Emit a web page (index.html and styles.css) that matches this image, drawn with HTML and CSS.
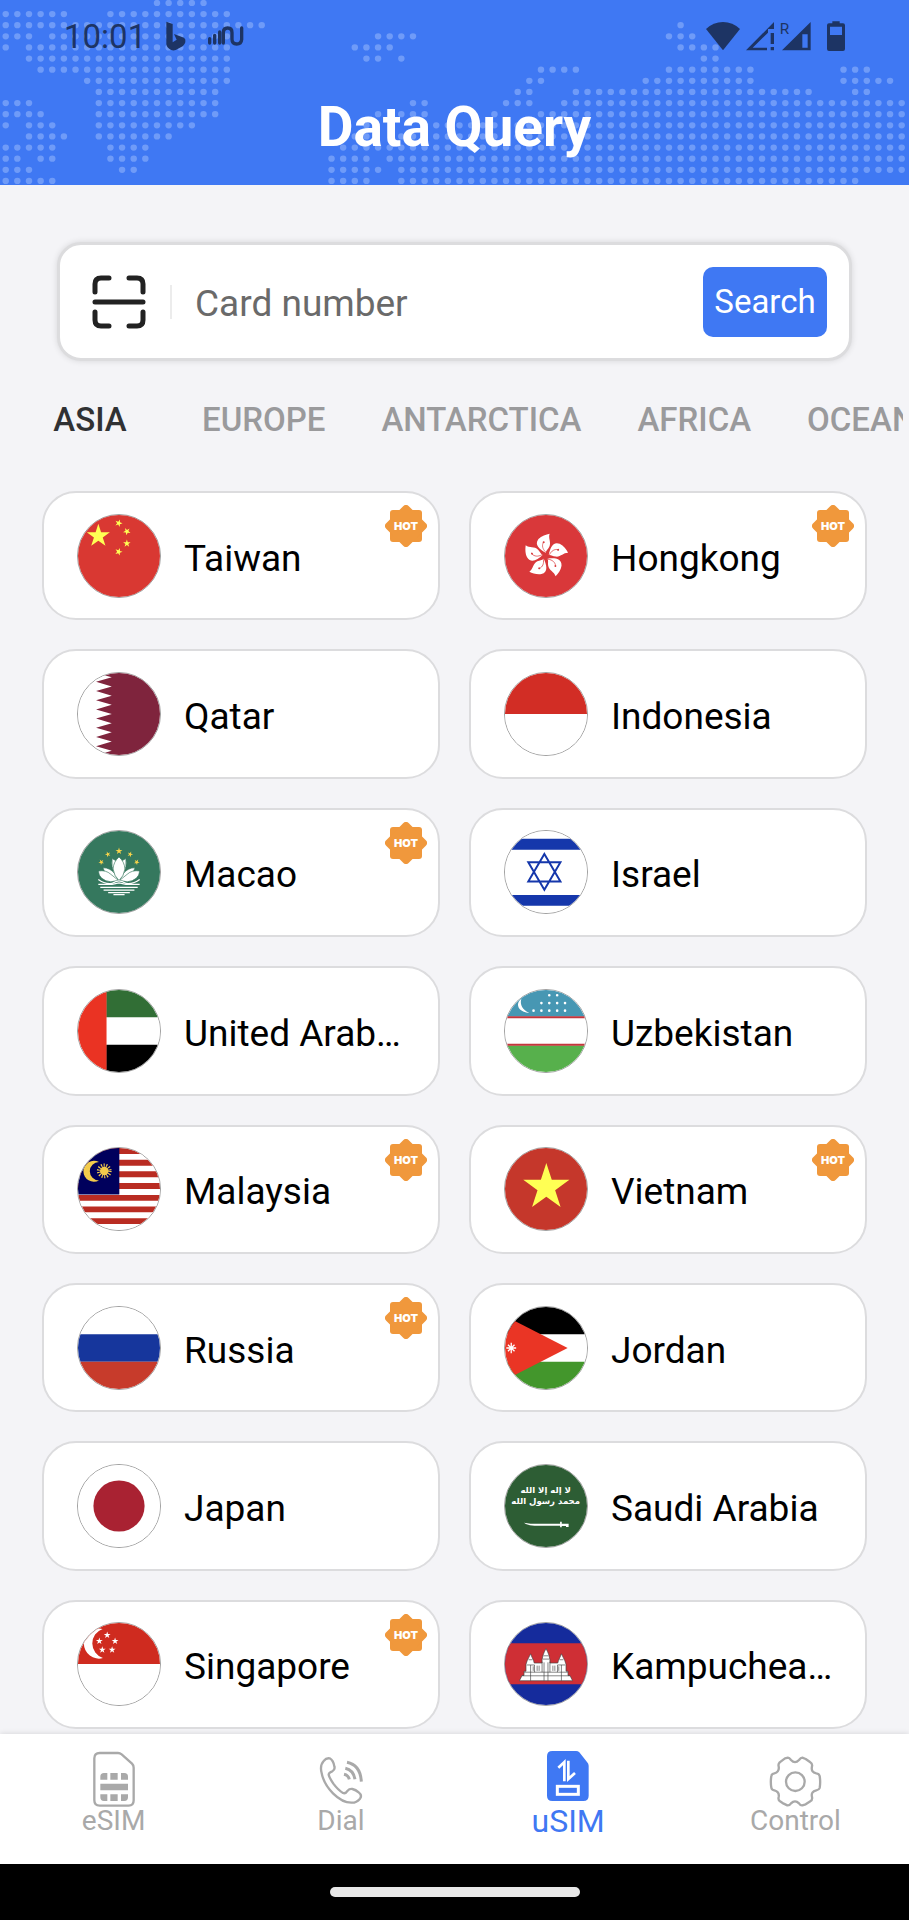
FILE: index.html
```html
<!DOCTYPE html>
<html lang="en">
<head>
    <meta charset="UTF-8">
    <meta name="viewport" content="width=device-width, initial-scale=1.0">
    <title>Data Query</title>
    <link rel="stylesheet" href="styles.css">
</head>
<body>

    <!-- Shared shapes -->
    <svg class="defs" aria-hidden="true">
        <defs>
            <path id="star" d="M0-1 .2245-.309 .951-.309 .363 .118 .588 .809 0 .382-.588 .809-.363 .118-.951-.309-.2245-.309z"/>
            <path id="petal" d="M0-10C-18-20-36-34-22-52C-13-62 2-66 12-68C7-54 18-42 11-28C7-20 2-18 0-10z"/>
            <g id="flower-part">
                <use href="#petal" fill="#fff"/>
                <path d="M0-12C-10-22-12-32-7-42" fill="none" stroke="#d9383a" stroke-width="2"/>
                <circle cx="-6" cy="-42" r="3" fill="#d9383a"/>
            </g>
            <symbol id="hot" viewBox="0 0 42 42">
                <rect x="5" y="5" width="32" height="32" rx="3" fill="#f0983c"/>
                <rect x="5" y="5" width="32" height="32" rx="4" fill="#f0983c" transform="rotate(45 21 21)"/>
                <text x="21" y="25" class="hot-text">HOT</text>
            </symbol>
        </defs>
    </svg>

    <!-- Header -->
    <header class="header">
        <!-- Dotted world map: one dash of zero length per dot -->
        <svg class="map" viewBox="0 0 909 185" preserveAspectRatio="xMidYMin slice" aria-hidden="true">
            <g transform="translate(-.1 -2.6) scale(11.636 11.125)">
                <path d="M13.5 .5h4.1
                    M.5 1.5h5.1M9.5 1.5h10.1
                    M.5 2.5h22.1M58.5 2.5h.1
                    M.5 3.5h2.1M4.5 3.5h15.1M32.5 3.5h3.1M57.5 3.5h2.1
                    M.5 4.5h.1M2.5 4.5h17.1M30.5 4.5h3.1M58.5 4.5h3.1
                    M2.5 5.5h17.1M31.5 5.5h1.1M34.5 5.5h.1M60.5 5.5h1.1
                    M3.5 6.5h16.1M46.5 6.5h3.1M57.5 6.5h7.1M72.5 6.5h2.1
                    M7.5 7.5h12.1M45.5 7.5h1.1M55.5 7.5h9.1M72.5 7.5h4.1
                    M8.5 8.5h10.1M44.5 8.5h1.1M49.5 8.5h20.1M73.5 8.5h1.1
                    M.5 9.5h2.1M8.5 9.5h10.1M35.5 9.5h1.1M43.5 9.5h2.1M48.5 9.5h29.1
                    M.5 10.5h3.1M8.5 10.5h10.1M32.5 10.5h.1M34.5 10.5h2.1M42.5 10.5h.1M46.5 10.5h31.1
                    M.5 11.5h.1M2.5 11.5h2.1M8.5 11.5h8.1M31.5 11.5h.1M37.5 11.5h40.1
                    M2.5 12.5h3.1M8.5 12.5h6.1M30.5 12.5h1.1M34.5 12.5h43.1
                    M.5 13.5h4.1M9.5 13.5h3.1M29.5 13.5h48.1
                    M.5 14.5h1.1M3.5 14.5h1.1M9.5 14.5h3.1M28.5 14.5h3.1M33.5 14.5h44.1
                    M.5 15.5h2.1M10.5 15.5h1.1M28.5 15.5h4.1M34.5 15.5h43.1
                    M.5 16.5h4.1M28.5 16.5h3.1M34.5 16.5h39.1"/>
            </g>
        </svg>

        <!-- Status bar -->
        <div class="status">
            <span class="clock">10:01</span>
            <svg width="20" height="30" viewBox="0 0 60 90" aria-hidden="true">
                <path d="M1 2 20 9V64L32 56 24 39 54 50Q60 54 58 64 56 71 50 76L29 87Q22 90 14 86 2 80 1 70z"/>
            </svg>
            <svg width="36" height="20" viewBox="0 0 108 60" fill="none" stroke="#1d3464" stroke-width="10" stroke-linecap="round" aria-hidden="true">
                <path d="M5 38V51M20 28V51M35 18V51M46 51V20Q46 6 59 6T72 20V40Q72 54 86 54T101 40V6"/>
            </svg>
            <span class="spacer"></span>
            <svg width="34" height="30" viewBox="0 0 102 90" aria-hidden="true">
                <path d="M0 24Q22 3 51 3T102 24L51 88z"/>
            </svg>
            <svg width="28" height="30" viewBox="0 0 84 90" aria-hidden="true">
                <path fill-rule="evenodd" d="M0 88 84 3V24H66V35L20 80H63V88zM74 36H84V69H74zM74 78H84V88H74z"/>
            </svg>
            <svg class="roaming-signal" width="31" height="30" viewBox="0 0 93 90" aria-hidden="true">
                <text x="-1" y="38" class="roaming">R</text>
                <path fill-rule="evenodd" d="M6 88 92 3V88zM67 40V80H83V40z"/>
            </svg>
            <svg width="28" height="30" viewBox="0 0 84 90" aria-hidden="true">
                <path fill-rule="evenodd" d="M46 1H68V7H78Q84 7 84 13V84Q84 90 78 90H36Q30 90 30 84V13Q30 7 36 7H46zM39 17V42H75V17z"/>
            </svg>
        </div>

        <h1 class="title">Data Query</h1>
    </header>

    <main class="content">

        <!-- Search box -->
        <form class="search" onsubmit="return false">
            <button type="button" class="scan" aria-label="Scan card">
                <svg width="54" height="54" viewBox="0 0 54 54" fill="none" stroke="#222" stroke-width="5" stroke-linecap="round">
                    <path d="M3 17V9Q3 3 9 3H17M37 3H45Q51 3 51 9V17M51 37V45Q51 51 45 51H37M17 51H9Q3 51 3 45V37M3 27H51"/>
                </svg>
            </button>
            <input type="text" class="search-input" placeholder="Card number" aria-label="Card number">
            <button type="submit" class="search-btn">Search</button>
        </form>

        <!-- Region tabs -->
        <nav class="tabs" aria-label="Regions">
            <button type="button" class="tab active">ASIA</button>
            <button type="button" class="tab">EUROPE</button>
            <button type="button" class="tab">ANTARCTICA</button>
            <button type="button" class="tab">AFRICA</button>
            <button type="button" class="tab">OCEANIA</button>
        </nav>

        <!-- Countries -->
        <div class="countries">
            <a href="#taiwan" class="card">
                <svg class="flag" viewBox="0 0 250 250" aria-hidden="true">
                    <path fill="#d93832" d="M0 0h250v250H0z"/>
                    <g fill="#ffff54">
                        <use href="#star" transform="translate(62 64) scale(37)"/>
                        <use href="#star" transform="translate(124 25) rotate(20) scale(12)"/>
                        <use href="#star" transform="translate(149 50) rotate(42) scale(12)"/>
                        <use href="#star" transform="translate(149 87) scale(12)"/>
                        <use href="#star" transform="translate(124 112) rotate(20) scale(12)"/>
                    </g>
                </svg>
                <span class="name">Taiwan</span>
                <svg class="hot"><use href="#hot"/></svg>
            </a>
            <a href="#hongkong" class="card">
                <svg class="flag" viewBox="0 0 250 250" aria-hidden="true">
                    <path fill="#d9383a" d="M0 0h250v250H0z"/>
                    <g transform="translate(124 125)">
                        <use href="#flower-part"/>
                        <use href="#flower-part" transform="rotate(72)"/>
                        <use href="#flower-part" transform="rotate(144)"/>
                        <use href="#flower-part" transform="rotate(216)"/>
                        <use href="#flower-part" transform="rotate(288)"/>
                    </g>
                </svg>
                <span class="name">Hongkong</span>
                <svg class="hot"><use href="#hot"/></svg>
            </a>

            <a href="#qatar" class="card">
                <svg class="flag" viewBox="0 0 250 250" aria-hidden="true">
                    <path fill="#fff" d="M0 0h250v250H0z"/>
                    <path fill="#7f243d" d="M250 0H55L103 13 55 27 103 41 55 55 103 69 55 83 103 97 55 111 103 125 55 139 103 153 55 167 103 181 55 195 103 209 55 223 103 237 55 251H250z"/>
                </svg>
                <span class="name">Qatar</span>
            </a>
            <a href="#indonesia" class="card">
                <svg class="flag" viewBox="0 0 250 250" aria-hidden="true">
                    <path fill="#fff" d="M0 0h250v250H0z"/>
                    <path fill="#d22d25" d="M0 0h250v125H0z"/>
                </svg>
                <span class="name">Indonesia</span>
            </a>

            <a href="#macao" class="card">
                <svg class="flag" viewBox="0 0 250 250" aria-hidden="true">
                    <path fill="#35785e" d="M0 0h250v250H0z"/>
                    <g fill="#f6d24a">
                        <use href="#star" transform="translate(125 61) scale(11)"/>
                        <use href="#star" transform="translate(91 71) rotate(-20) scale(9)"/>
                        <use href="#star" transform="translate(159 71) rotate(20) scale(9)"/>
                        <use href="#star" transform="translate(71 95) rotate(-30) scale(9)"/>
                        <use href="#star" transform="translate(179 95) rotate(30) scale(9)"/>
                    </g>
                    <g fill="#fff" stroke="#35785e" stroke-width="2">
                        <path d="M104 84Q100 110 112 130L125 150 138 130Q150 110 146 84Q125 100 104 84z"/>
                        <path d="M76 112Q98 112 112 130L122 150Q86 148 76 112zM174 112Q152 112 138 130L128 150Q164 148 174 112z"/>
                        <path d="M62 122Q64 150 100 155L125 150 150 155Q186 150 188 122Q165 118 150 132L125 152 100 132Q85 118 62 122z"/>
                        <path d="M125 79Q108 94 107 116 110 138 125 151 140 138 143 116 142 94 125 79z"/>
                    </g>
                    <g fill="none" stroke="#fff" stroke-width="4">
                        <path d="M62 148Q80 162 103 160 116 152 125 152 134 152 147 160 170 162 188 148"/>
                        <path d="M62 163H104L125 158 146 163H188M68 172H182M78 180H172M92 188H158M108 194H142"/>
                    </g>
                </svg>
                <span class="name">Macao</span>
                <svg class="hot"><use href="#hot"/></svg>
            </a>
            <a href="#israel" class="card">
                <svg class="flag" viewBox="0 0 250 250" aria-hidden="true">
                    <path fill="#fff" d="M0 0h250v250H0z"/>
                    <path fill="#1537ab" d="M0 24h250v33H0zM0 195h250v33H0z"/>
                    <path fill="none" stroke="#1537ab" stroke-width="6" d="M120 70 169 154H71zM120 179 71 95H169z"/>
                </svg>
                <span class="name">Israel</span>
            </a>

            <a href="#uae" class="card">
                <svg class="flag" viewBox="0 0 250 250" aria-hidden="true">
                    <path fill="#fff" d="M0 0h250v250H0z"/>
                    <path fill="#316e35" d="M86 0h164v83H86z"/>
                    <path d="M86 167h164v83H86z"/>
                    <path fill="#ea3323" d="M0 0h87v250H0z"/>
                </svg>
                <span class="name">United Arab…</span>
            </a>
            <a href="#uzbekistan" class="card">
                <svg class="flag" viewBox="0 0 250 250" aria-hidden="true">
                    <path fill="#fff" d="M0 0h250v250H0z"/>
                    <path fill="#4797b3" d="M0 0h250v81H0z"/>
                    <path fill="#57b04c" d="M0 169h250v81H0z"/>
                    <path fill="#c4363c" d="M0 80h250v6H0zM0 164h250v6H0z"/>
                    <path fill="#fff" d="M50 27C30 42 40 68 74 70C54 62 44 44 50 27z"/>
                    <path fill="none" stroke="#fff" stroke-width="8" stroke-linecap="round" stroke-dasharray="0 24" d="M135 16h25M111 40h73M87 63h97"/>
                </svg>
                <span class="name">Uzbekistan</span>
            </a>

            <a href="#malaysia" class="card">
                <svg class="flag" viewBox="0 0 250 250" aria-hidden="true">
                    <path fill="#fff" d="M0 0h250v250H0z"/>
                    <path fill="none" stroke="#b92c22" stroke-width="18" d="M0 9h250M0 45h250M0 80h250M0 116h250M0 152h250M0 187h250M0 223h250"/>
                    <path fill="#00005c" d="M0 0h126v142H0z"/>
                    <path fill="#f3cb4c" d="M64 43A32 32 0 1 0 64 99A28 28 0 1 1 64 43z"/>
                    <circle cx="80" cy="70" r="13" fill="#f3cb4c"/>
                    <circle cx="80" cy="70" r="16" fill="none" stroke="#f3cb4c" stroke-width="13" stroke-dasharray="3 4.18"/>
                </svg>
                <span class="name">Malaysia</span>
                <svg class="hot"><use href="#hot"/></svg>
            </a>
            <a href="#vietnam" class="card">
                <svg class="flag" viewBox="0 0 250 250" aria-hidden="true">
                    <path fill="#c5372b" d="M0 0h250v250H0z"/>
                    <use href="#star" fill="#ffff54" transform="translate(126 120) scale(74)"/>
                </svg>
                <span class="name">Vietnam</span>
                <svg class="hot"><use href="#hot"/></svg>
            </a>

            <a href="#russia" class="card">
                <svg class="flag" viewBox="0 0 250 250" aria-hidden="true">
                    <path fill="#fff" d="M0 0h250v250H0z"/>
                    <path fill="#16369c" d="M0 83h250v84H0z"/>
                    <path fill="#c73b2b" d="M0 167h250v83H0z"/>
                </svg>
                <span class="name">Russia</span>
                <svg class="hot"><use href="#hot"/></svg>
            </a>
            <a href="#jordan" class="card">
                <svg class="flag" viewBox="0 0 250 250" aria-hidden="true">
                    <path fill="#fff" d="M0 0h250v250H0z"/>
                    <path d="M0 0h250v83H0z"/>
                    <path fill="#43962c" d="M0 167h250v83H0z"/>
                    <path fill="#ea3525" d="M-10 22 191 125-10 228z"/>
                    <path stroke="#fff" stroke-width="4" d="M19 109v32M4 125h30M9 115l20 20M29 115l-20 20"/>
                </svg>
                <span class="name">Jordan</span>
            </a>

            <a href="#japan" class="card">
                <svg class="flag" viewBox="0 0 250 250" aria-hidden="true">
                    <path fill="#fff" d="M0 0h250v250H0z"/>
                    <circle cx="125" cy="125" r="78" fill="#a92232"/>
                </svg>
                <span class="name">Japan</span>
            </a>
            <a href="#saudi-arabia" class="card">
                <svg class="flag" viewBox="0 0 250 250" aria-hidden="true">
                    <path fill="#2d5d34" d="M0 0h250v250H0z"/>
                    <text x="124" y="86" class="script">لا إله إلا الله</text>
                    <text x="124" y="118" class="script">محمد رسول الله</text>
                    <path fill="#fff" d="M58 176 78 179H168V173H173V179H194V189H186V186H173V190H168V185H90Q68 184 58 176z"/>
                </svg>
                <span class="name">Saudi Arabia</span>
            </a>

            <a href="#singapore" class="card">
                <svg class="flag" viewBox="0 0 250 250" aria-hidden="true">
                    <path fill="#fff" d="M0 0h250v250H0z"/>
                    <path fill="#cf2b1f" d="M0 0h250v125H0z"/>
                    <path fill="#fff" d="M75 18A46 46 0 1 0 76 107A47 47 0 0 1 75 18z"/>
                    <g fill="#fff">
                        <use href="#star" transform="translate(89 37) scale(11)"/>
                        <use href="#star" transform="translate(65 55) scale(11)"/>
                        <use href="#star" transform="translate(113 55) scale(11)"/>
                        <use href="#star" transform="translate(74 82) scale(11)"/>
                        <use href="#star" transform="translate(104 82) scale(11)"/>
                    </g>
                </svg>
                <span class="name">Singapore</span>
                <svg class="hot"><use href="#hot"/></svg>
            </a>
            <a href="#kampuchea" class="card">
                <svg class="flag" viewBox="0 0 250 250" aria-hidden="true">
                    <path fill="#152b9c" d="M0 0h250v250H0z"/>
                    <path fill="#cf2f35" d="M0 62h250v125H0z"/>
                    <g fill="#fff" stroke="#444" stroke-width="2">
                        <path d="M44 176 52 160H58V147H64V126L68 114 72 106 78 94 83 106 87 114 89 122H113V112L116 98 120 88 125 78 130 88 134 98 137 112V122H161L163 114 167 106 172 94 178 106 182 114 186 126V147H192V160H198L206 176z"/>
                        <path d="M58 150H192M52 161H198M66 128H90V150M184 128H160V150M113 118V150M137 118V150M72 112H84M166 112H178M117 100H133M115 110H135M78 128V176M172 128V176M119 120V176M131 120V176M98 130V146M104 130V146M146 130V146M152 130V146M86 132V146M164 132V146"/>
                    </g>
                </svg>
                <span class="name">Kampuchea…</span>
            </a>
        </div>
    </main>

    <!-- Bottom navigation -->
    <nav class="bottom-nav" aria-label="Main">
        <a href="#esim" class="nav-item">
            <svg class="nav-icon" viewBox="0 0 168 168" aria-hidden="true">
                <path fill="none" stroke="#a9a9a9" stroke-width="7" d="M41 6H96Q102 6 107 10L138 38Q143 43 143 50V148Q143 164 128 164H41Q25 164 25 148V22Q25 6 41 6z"/>
                <path fill="#a9a9a9" d="M54 66H64V86H43V77Q43 66 54 66zM73 66H95V86H73zM105 66H115Q126 66 126 77V86H105zM43 98H126V118H43zM43 130H64V150H54Q43 150 43 139zM73 130H95V150H73zM105 130H126V139Q126 150 115 150H105z"/>
            </svg>
            <span>eSIM</span>
        </a>
        <a href="#dial" class="nav-item">
            <svg class="nav-icon" viewBox="0 0 168 168" fill="none" stroke="#a9a9a9" aria-hidden="true">
                <path stroke-width="7" stroke-linejoin="round" d="M50 22Q40 20 32 30 21 42 25 62 31 98 60 127 88 155 115 155 130 156 141 143 148 133 138 125 128 116 118 114 109 113 104 119 98 129 90 126 76 118 61 98 49 80 47 71 48 64 58 61 67 56 64 46 61 28 50 22z"/>
                <path stroke-width="9" d="M93 70Q106 73 109 85M97 52Q121 57 126 85M102 34Q142 42 145 92"/>
            </svg>
            <span>Dial</span>
        </a>
        <a href="#usim" class="nav-item active">
            <svg class="nav-icon" viewBox="0 0 168 168" aria-hidden="true">
                <path fill="#3f78f3" d="M37 0H108Q114 0 118 4L141 33Q146 38 146 44V134Q146 150 130 150H37Q21 150 21 134V16Q21 0 37 0z"/>
                <path fill="none" stroke="#fff" stroke-width="8" d="M55 50 73 33V91M85 29V84L105 66"/>
                <rect x="52" y="106" width="63" height="24" fill="none" stroke="#fff" stroke-width="9"/>
            </svg>
            <span>uSIM</span>
        </a>
        <a href="#control" class="nav-item">
            <svg class="nav-icon" viewBox="0 0 168 168" fill="none" stroke="#a9a9a9" stroke-width="7" aria-hidden="true">
                <path stroke-linejoin="round" d="M54 22 63 20Q67 20 72 27 84 40 96 27 101 20 106 20L116 24 129 33Q137 38 135 46 131 64 148 67 156 68 158 75 161 93 158 111 156 117 148 118 131 122 135 138 137 147 130 151L116 160 106 163Q101 164 96 157 84 145 72 157 67 164 61 163L50 158 38 150Q33 146 35 138 38 122 22 118 14 117 13 110 10 93 13 75 14 68 22 67 38 63 35 46 33 39 38 34z"/>
                <circle cx="85" cy="92" r="28"/>
            </svg>
            <span>Control</span>
        </a>
    </nav>

    <!-- System gesture bar -->
    <div class="gesture"><div class="pill"></div></div>

</body>
</html>
```
FILE: styles.css
```css
/* General Styles */
* {
    box-sizing: border-box;
}

body {
    font-family: Roboto, 'Liberation Sans', sans-serif;
    background-color: #f4f4f7;
    color: #000;
    margin: 0;
    min-height: 100vh;
    display: flex;
    flex-direction: column;
}

button, input {
    font-family: inherit;
    border: none;
    padding: 0;
    background: none;
}

a {
    color: inherit;
    text-decoration: none;
}

.defs {
    position: absolute;
    width: 0;
    height: 0;
}

/* Header */
.header {
    position: relative;
    background-color: #3f78f3;
    padding-bottom: 3px;
}

.map {
    position: absolute;
    inset: 0;
    width: 100%;
    height: 100%;
    fill: none;
    stroke: #6f9bf8;
    stroke-width: 0.56;
    stroke-linecap: round;
    stroke-dasharray: 0 1;
}

.status {
    position: relative;
    display: flex;
    align-items: center;
    gap: 6px;
    height: 72px;
    padding: 0 64px;
    color: #1d3464;
    fill: #1d3464;
}

.clock {
    font-size: 33px;
    margin-right: 14px;
}

.status svg:nth-of-type(1) {
    margin-right: 16px;
}

.spacer {
    flex: 1;
}

.roaming-signal {
    overflow: visible;
}

.roaming {
    font-size: 46px;
}

.title {
    position: relative;
    margin: 0;
    font-size: 55px;
    font-weight: 700;
    line-height: 110px;
    text-align: center;
    color: #fff;
}

/* Content */
.content {
    flex: 1;
    display: flex;
    flex-direction: column;
    padding: 57px 0 5px;
}

.search {
    display: flex;
    align-items: center;
    margin: 0 57px;
    height: 119px;
    padding: 0 22px 0 32px;
    background-color: #fff;
    border: 3px solid #dcdcde;
    border-radius: 24px;
    box-shadow: 0 0 6px rgba(0, 0, 0, 0.12);
}

.scan {
    display: flex;
    align-items: center;
    height: 34px;
    padding-right: 24px;
    border-right: 2px solid #ececec;
    cursor: pointer;
}

.search-input {
    flex: 1;
    min-width: 0;
    padding: 3px 23px 0;
    font-size: 37px;
    outline: none;
}

.search-input::placeholder {
    color: #6a6a6a;
    opacity: 1;
}

.search-btn {
    width: 124px;
    height: 70px;
    border-radius: 10px;
    background-color: #3f78f3;
    color: #fff;
    font-size: 33px;
    cursor: pointer;
}

/* Tabs */
.tabs {
    display: flex;
    margin: 0 6px 12px;
    overflow: hidden;
}

.tab {
    flex: none;
    min-width: 168px;
    padding: 0 28px;
    font-size: 33px;
    font-weight: 500;
    line-height: 118px;
    color: #9a9a9c;
    cursor: pointer;
}

.tab.active {
    color: #303133;
}

/* Country cards */
.countries {
    flex: 1;
    display: grid;
    grid-template-columns: 1fr 1fr;
    grid-auto-rows: 1fr;
    gap: 29px;
    padding: 0 42px;
}

.card {
    position: relative;
    display: flex;
    align-items: center;
    gap: 23px;
    min-width: 0;
    padding: 20px 33px;
    background-color: #fff;
    border: 2px solid #dcdcde;
    border-radius: 34px;
}

.flag {
    flex: none;
    width: 84px;
    height: 84px;
    border: 1px solid #a0a0a0;
    border-radius: 50%;
}

.name {
    font-size: 37px;
    line-height: 44px;
    padding-top: 6px;
    white-space: nowrap;
}

.script {
    font-family: 'DejaVu Sans', sans-serif;
    font-size: 26px;
    font-weight: 700;
    text-anchor: middle;
    fill: #fff;
}

.hot {
    position: absolute;
    top: 12px;
    right: 11px;
    width: 42px;
    height: 42px;
}

.hot-text {
    font-family: Inter, Roboto, sans-serif;
    font-size: 11px;
    font-weight: 900;
    text-anchor: middle;
    fill: #fff;
}

/* Bottom navigation */
.bottom-nav {
    display: flex;
    height: 130px;
    padding-top: 17px;
    background-color: #fff;
    box-shadow: 0 -1px 5px rgba(0, 0, 0, 0.1);
}

.nav-item {
    flex: 1;
    display: flex;
    flex-direction: column;
    align-items: center;
    font-size: 28px;
    line-height: 28px;
    color: #a9a9a9;
}

.nav-item.active {
    font-size: 32px;
    color: #3f78f3;
}

.nav-icon {
    width: 56px;
    height: 56px;
}

.gesture {
    display: flex;
    align-items: center;
    justify-content: center;
    height: 56px;
    background-color: #000;
}

.pill {
    width: 250px;
    height: 10px;
    border-radius: 5px;
    background-color: #e8e8e8;
}
```
